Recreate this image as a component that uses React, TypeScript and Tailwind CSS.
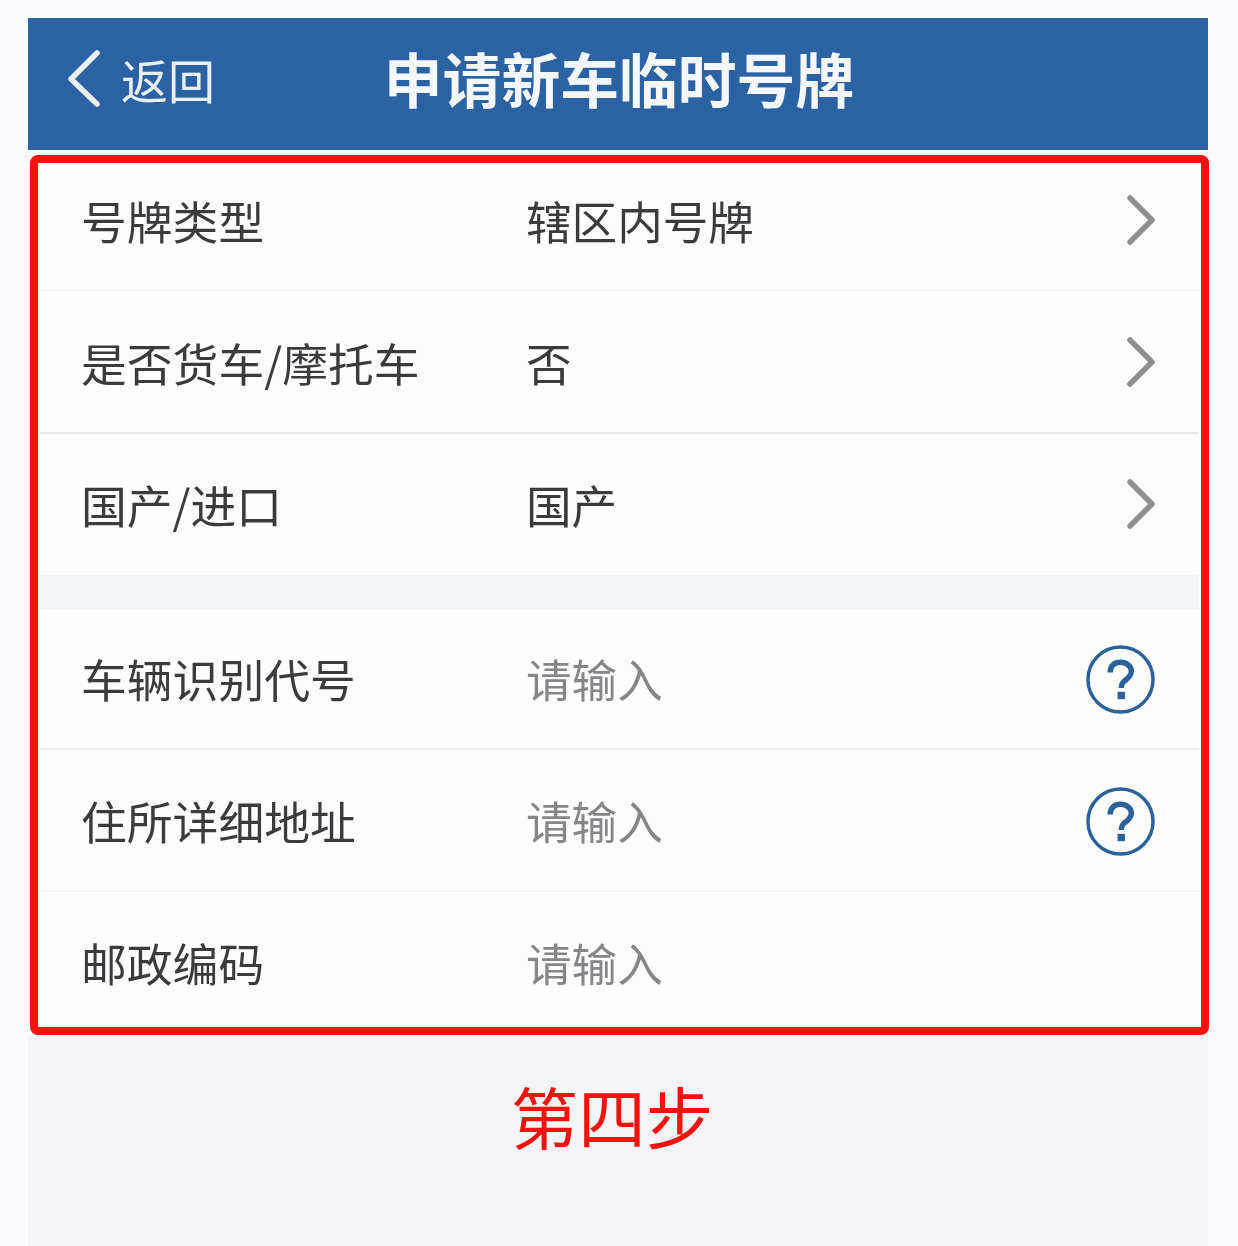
import { ChevronRight } from "lucide-react";

const cjk = "font-['Noto_Sans_CJK_SC','Liberation_Sans',sans-serif]";

function QuestionIcon() {
  return (
    <svg width="71" height="71" viewBox="0 0 72 72" fill="none" className="mt-[-8px] mr-[-1px]">
      <circle cx="36" cy="36" r="33" stroke="#2c6199" strokeWidth="3.500" />
      <path
        d="M25.500 29c0-7 4.500-10.500 10.500-10.500S47 22.500 47 27.500c0 4-2.200 6.200-5.200 8.500-3.200 2.400-5 4-5 8.500"
        stroke="#2c6199"
        strokeWidth="5.500"
      />
      <rect x="33" y="48.500" width="7.500" height="7.500" fill="#2c6199" />
    </svg>
  );
}

function Row({
  label,
  value,
  placeholder,
  arrow,
  help,
  className,
}: {
  label: string;
  value: string;
  placeholder?: boolean;
  arrow?: boolean;
  help?: boolean;
  className: string;
}) {
  return (
    <div className={`flex items-center pl-[41px] pr-[44px] ${className}`}>
      <div className="mt-[-10px] w-[445px] shrink-0 text-[45.800px] leading-[60px] text-[#3b3b3f]">{label}</div>
      <div className={`mt-[-10px] flex-1 text-[45.600px] leading-[60px] ${placeholder ? "text-[#85858a]" : "text-[#3b3b3f]"}`}>
        {value}
      </div>
      {arrow && (
        <ChevronRight
          size={88}
          strokeWidth={1.500}
          className="mt-[-30px] mb-[-20px] mr-[-30px] text-[#8e8e93]"
        />
      )}
      {help && <QuestionIcon />}
    </div>
  );
}

export default function App() {
  return (
    <div className={`h-[1246px] overflow-hidden bg-[#fbfbfd] pt-[18px] pl-[28px] pr-[30px] blur-[0.5px] ${cjk}`}>
      <div className="relative flex h-[132px] items-center justify-center bg-[#2b62a3]">
        <div className="absolute left-[30px] top-[31px] flex items-center text-[#e8eff5]">
          <svg width="46" height="64" viewBox="0 0 46 64" fill="none" className="mt-[-4px]">
            <path d="M39 6 L13 32 L39 57" stroke="currentColor" strokeWidth="5.500" strokeLinecap="round" strokeLinejoin="round" />
          </svg>
          <span className="mb-[4px] ml-[17px] text-[47px] leading-[60px]">返回</span>
        </div>
        <h1 className="ml-[2px] mt-[-12px] text-[58.800px] font-bold leading-[70px] text-[#f4f7fb]">申请新车临时号牌</h1>
      </div>

      <div className="ml-[2px] mr-[-1px] mt-[5px] rounded-[8px] border-[8px] border-[#f7130d] bg-[#fdfdfe] px-[2px]">
        <Row label="号牌类型" value="辖区内号牌" arrow className="h-[128px] border-b-2 border-[#f6f6f8] pb-[2px]" />
        <Row label="是否货车/摩托车" value="否" arrow className="h-[143px] border-b-2 border-[#e6e6ea] pt-[10px]" />
        <Row label="国产/进口" value="国产" arrow className="h-[141px] pt-[8px]" />
        <div className="h-[35px] bg-[#f4f5f7]" />
        <Row label="车辆识别代号" value="请输入" placeholder help className="h-[140px] border-b-2 border-[#ececef] pt-[8px]" />
        <Row label="住所详细地址" value="请输入" placeholder help className="h-[142px] border-b-2 border-[#f4f4f6] pt-[10px]" />
        <Row label="邮政编码" value="请输入" placeholder className="h-[135px] pt-[14px]" />
      </div>

      <div className="flex h-[211px] justify-center bg-[#f5f5f9] pt-[42px]">
        <div className="ml-[-12px] text-[67.500px] leading-[76px] text-[#f3120c]">第四步</div>
      </div>
    </div>
  );
}
